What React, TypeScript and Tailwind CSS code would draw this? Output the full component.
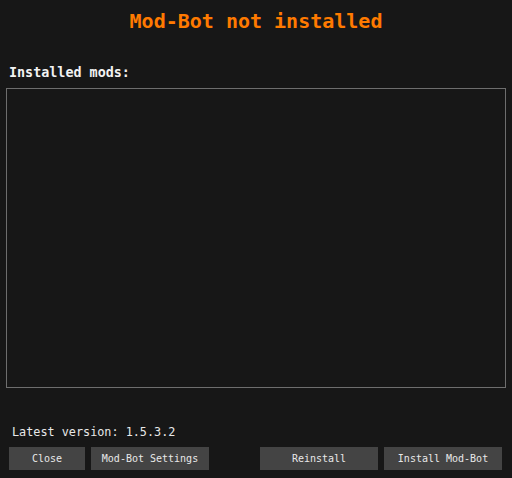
import React from "react";

const mono = { fontFamily: '"DejaVu Sans Mono", "Liberation Mono", monospace' };

const Btn: React.FC<{ label: string; className: string }> = ({ label, className }) => (
  <button
    className={`h-[23px] bg-[#444444] text-[10px] text-[#e8e8e8] flex items-center justify-center ${className}`}
  >
    {label}
  </button>
);

const App: React.FC = () => {
  return (
    <div className="w-[512px] h-[478px] bg-[#171717] flex flex-col" style={mono}>
      <h1 className="text-[20px] font-bold text-[#ff7a00] text-center pt-[8px] leading-[26px]">
        Mod-Bot not installed
      </h1>
      <p className="text-[13.4px] font-bold text-[#f2f2f2] pl-[9px] mt-[30px] leading-[18px]">
        Installed mods:
      </p>
      <div className="mx-[6px] mt-[6px] h-[300px] border border-[#6e6e6e]" />
      <p className="text-[11.8px] text-[#e8e8e8] pl-[12px] mt-[37px] leading-[14px]">
        Latest version: 1.5.3.2
      </p>
      <div className="flex mt-[8px]">
        <Btn label="Close" className="ml-[9px] w-[76px]" />
        <Btn label="Mod-Bot Settings" className="ml-[6px] w-[118px]" />
        <Btn label="Reinstall" className="ml-[51px] w-[118px]" />
        <Btn label="Install Mod-Bot" className="ml-[6px] w-[118px]" />
      </div>
    </div>
  );
};

export default App;
